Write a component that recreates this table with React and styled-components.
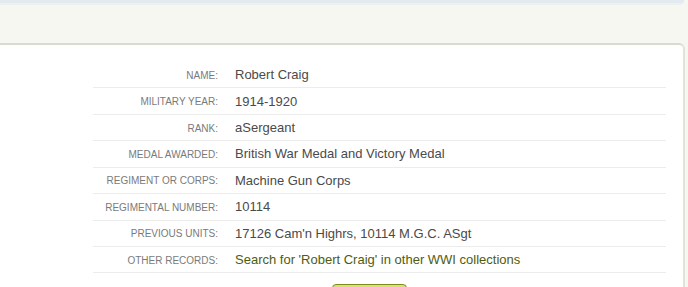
import styled, { createGlobalStyle } from "styled-components";

const GlobalStyle = createGlobalStyle`
  html, body {
    margin: 0;
    padding: 0;
    background: #f7f7f2;
    font-family: Arial, "Liberation Sans", sans-serif;
    overflow: hidden;
  }
`;

const Page = styled.div`
  width: 688px;
  height: 287px;
  overflow: hidden;
`;

const TopBar = styled.div`
  height: 3px;
  background: #e3ebf1;
  border-bottom: 2px solid #edf1f0;
  margin-right: 4px;
  border-bottom-right-radius: 4px;
`;

const Spacer = styled.div`
  height: 38px;
`;

const Card = styled.div`
  width: 685px;
  height: 260px;
  background: #ffffff;
  border-top: 2px solid #dadace;
  border-right: 2px solid #e2e2d8;
  border-top-right-radius: 6px;
  box-sizing: border-box;
  padding: 17px 18px 0 93px;
`;

const Table = styled.div`
  width: 573px;
`;

const Row = styled.div`
  display: grid;
  grid-template-columns: 142px 1fr;
  align-items: center;
  height: 26.43px;
  box-sizing: border-box;
  border-bottom: 1px solid #ececec;
`;

const Label = styled.div`
  text-align: right;
  padding-right: 17px;
  font-size: 10px;
  color: #7a7a7a;
  text-transform: uppercase;
  padding-top: 1px;
`;

const Value = styled.div`
  font-size: 13px;
  color: ${(p) => (p.$link ? "#4e5c10" : "#4a4a4a")};
`;

const Actions = styled.div`
  display: flex;
  justify-content: center;
  padding-top: 11px;
  padding-right: 20px;
`;

const Button = styled.div`
  width: 75px;
  height: 22px;
  border: 1px solid #7d8c1c;
  border-radius: 4px;
  background: linear-gradient(#d7e27a, #b9c94a);
  box-sizing: border-box;
`;

const rows = [
  ["Name:", "Robert Craig"],
  ["Military Year:", "1914-1920"],
  ["Rank:", "aSergeant"],
  ["Medal Awarded:", "British War Medal and Victory Medal"],
  ["Regiment or Corps:", "Machine Gun Corps"],
  ["Regimental Number:", "10114"],
  ["Previous Units:", "17126 Cam'n Highrs, 10114 M.G.C. ASgt"],
  ["Other Records:", "Search for 'Robert Craig' in other WWI collections", true],
];

export default function App() {
  return (
    <Page>
      <GlobalStyle />
      <TopBar />
      <Spacer />
      <Card>
        <Table>
          {rows.map(([label, value, link]) => (
            <Row key={label}>
              <Label>{label}</Label>
              <Value $link={link}>{value}</Value>
            </Row>
          ))}
        </Table>
        <Actions>
          <Button />
        </Actions>
      </Card>
    </Page>
  );
}
